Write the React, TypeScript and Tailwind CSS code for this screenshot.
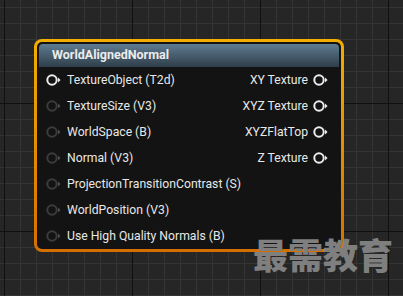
import React from "react"

type Pin = { label: string; connected?: boolean }

const inputs: Pin[] = [
  { label: "TextureObject (T2d)", connected: true },
  { label: "TextureSize (V3)" },
  { label: "WorldSpace (B)" },
  { label: "Normal (V3)" },
  { label: "ProjectionTransitionContrast (S)" },
  { label: "WorldPosition (V3)" },
  { label: "Use High Quality Normals (B)" },
]

const outputs: Pin[] = [
  { label: "XY Texture", connected: true },
  { label: "XYZ Texture", connected: true },
  { label: "XYZFlatTop", connected: true },
  { label: "Z Texture", connected: true },
]

function PinIcon({ connected }: { connected?: boolean }) {
  const ring = connected ? "#ebebeb" : "#3b3d3b"
  const arrow = connected ? "#ebebeb" : "#4a4c4a"
  return (
    <svg width="16" height="12" viewBox="0 0 16 12" className="shrink-0">
      <circle cx="6" cy="6" r="4.7" fill="#121312" stroke={ring} strokeWidth="2" />
      <path d="M12 3.6 L14.6 6 L12 8.4 Z" fill={arrow} />
    </svg>
  )
}

export default function App() {
  return (
    <div className="relative h-[296px] w-[403px] overflow-hidden bg-[#262626] bg-[image:linear-gradient(to_right,#101010_1px,transparent_1px),linear-gradient(to_bottom,#101010_1px,transparent_1px),linear-gradient(to_right,#343434_1px,transparent_1px),linear-gradient(to_bottom,#343434_1px,transparent_1px)] bg-[size:128px_128px,128px_128px,16px_16px,16px_16px] bg-[position:4px_103px,4px_103px,4px_7px,4px_7px] pl-[34px] pt-[39px] font-['Roboto',sans-serif]">
      {/* selected node: orange outline */}
      <div className="h-[213px] w-[310px] rounded-[8px] bg-[linear-gradient(to_bottom,#f3ae00,#d46f00)] p-[3px]">
        <div className="flex h-full flex-col rounded-[5px] bg-[#121312] p-[2px] pb-0">
          <div className="flex h-[23px] items-center rounded-t-[4px] bg-[linear-gradient(to_bottom,#5f7b91,#2f3e49)] pl-[13px] text-[12.5px] font-bold text-[#ececec]">
            WorldAlignedNormal
          </div>
          <div className="flex flex-1 justify-between text-[12.2px] text-[#e8e8e8]">
            <div className="flex flex-col pl-[7px]">
              {inputs.map((pin) => (
                <div key={pin.label} className="flex h-[26px] items-center gap-[5px]">
                  <PinIcon connected={pin.connected} />
                  <span>{pin.label}</span>
                </div>
              ))}
            </div>
            <div className="flex flex-col pr-[10px]">
              {outputs.map((pin) => (
                <div key={pin.label} className="flex h-[26px] items-center justify-end gap-[5px]">
                  <span>{pin.label}</span>
                  <PinIcon connected={pin.connected} />
                </div>
              ))}
            </div>
          </div>
        </div>
      </div>

      {/* watermark */}
      <div className="absolute left-[253px] top-[236px] font-['Noto_Sans_CJK_SC',sans-serif] text-[35px] font-black leading-none text-[#7f7f7f]">
        最需教育
      </div>
    </div>
  )
}
